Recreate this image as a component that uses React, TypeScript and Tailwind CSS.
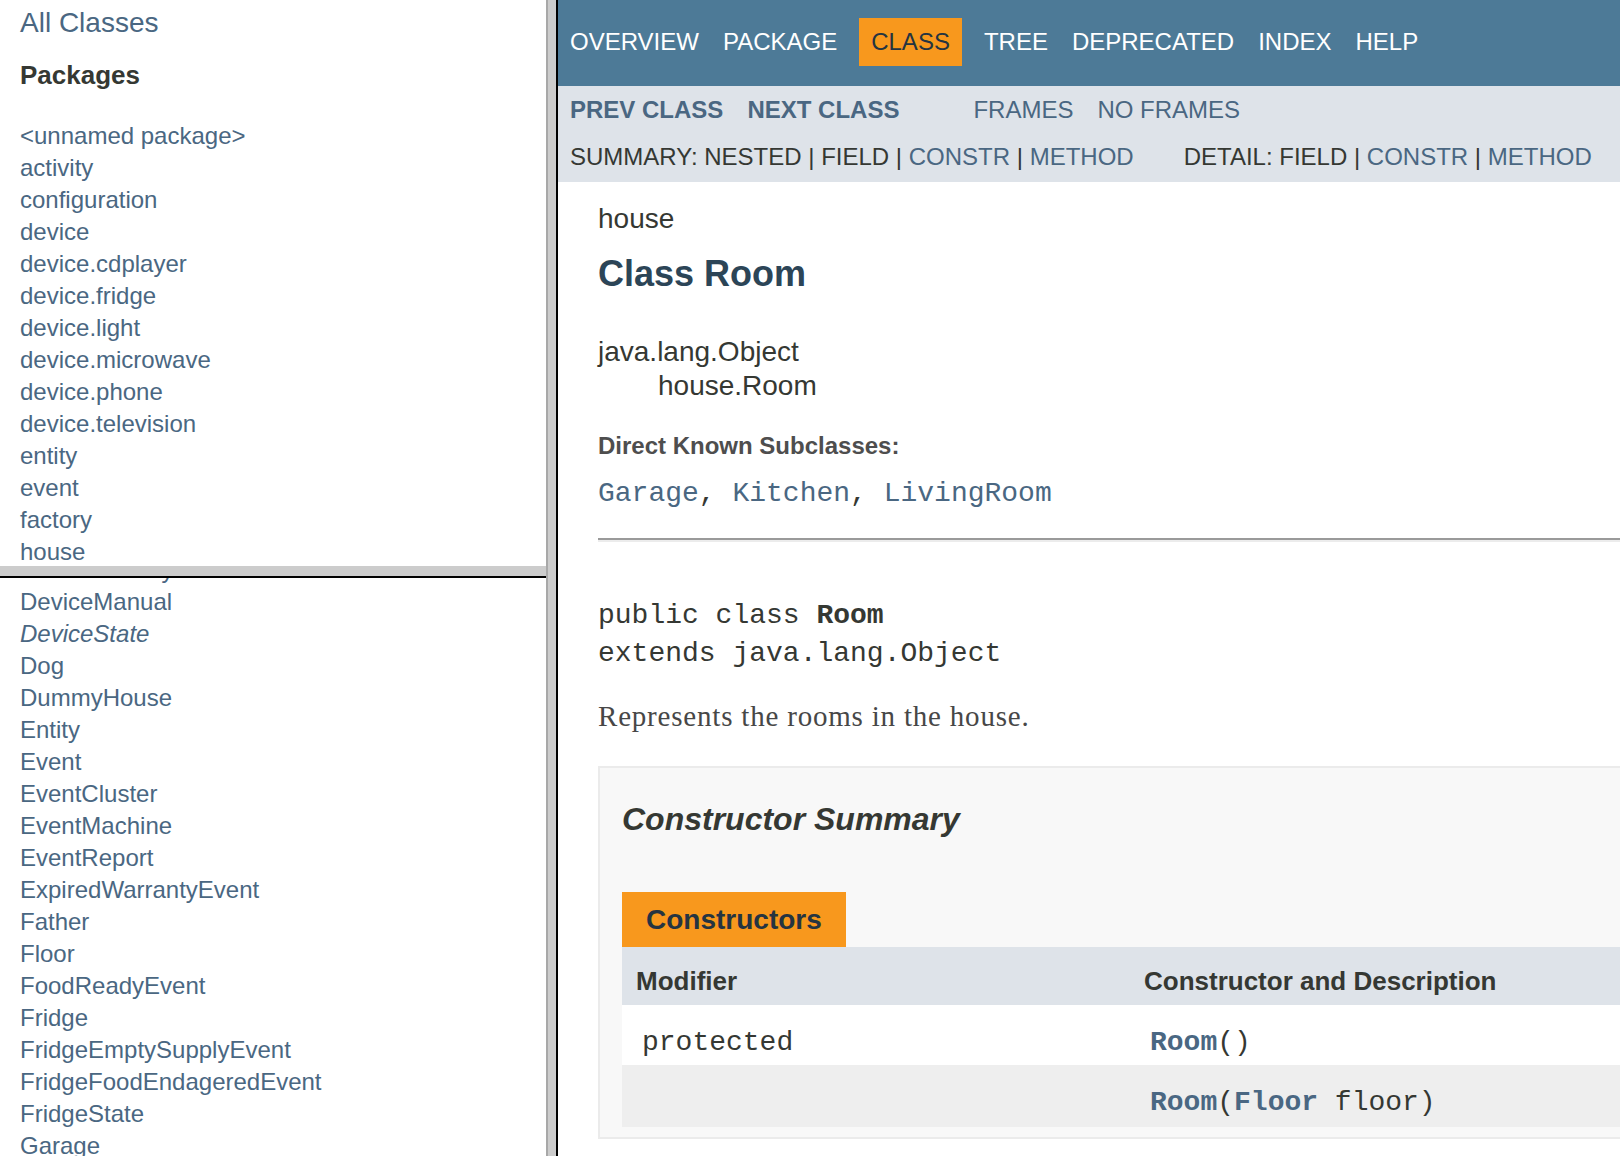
import type { ReactNode } from 'react'

const packages = [
  '<unnamed package>',
  'activity',
  'configuration',
  'device',
  'device.cdplayer',
  'device.fridge',
  'device.light',
  'device.microwave',
  'device.phone',
  'device.television',
  'entity',
  'event',
  'factory',
  'house',
]

const classes: { name: string; italic?: boolean }[] = [
  { name: 'DeviceFactory' },
  { name: 'DeviceManual' },
  { name: 'DeviceState', italic: true },
  { name: 'Dog' },
  { name: 'DummyHouse' },
  { name: 'Entity' },
  { name: 'Event' },
  { name: 'EventCluster' },
  { name: 'EventMachine' },
  { name: 'EventReport' },
  { name: 'ExpiredWarrantyEvent' },
  { name: 'Father' },
  { name: 'Floor' },
  { name: 'FoodReadyEvent' },
  { name: 'Fridge' },
  { name: 'FridgeEmptySupplyEvent' },
  { name: 'FridgeFoodEndageredEvent' },
  { name: 'FridgeState' },
  { name: 'Garage' },
  { name: 'GarageDoor' },
]

const topNav = ['OVERVIEW', 'PACKAGE', 'CLASS', 'TREE', 'DEPRECATED', 'INDEX', 'HELP']

function A({ children, bold }: { children: ReactNode; bold?: boolean }) {
  return <a className={bold ? 'font-bold text-[#4A6782]' : 'text-[#4A6782]'}>{children}</a>
}

function Sidebar() {
  return (
    <div className="flex w-[546px] shrink-0 flex-col">
      <div className="h-[566px] overflow-hidden pl-5">
        <div className="pt-[7px] text-[28px] leading-8 text-[#4A6782]">All Classes</div>
        <h2 className="mt-[21px] text-[26px] leading-[30px] font-bold text-[#353833]">Packages</h2>
        <ul className="mt-[30px]">
          {packages.map((p) => (
            <li key={p} className="text-[24px] leading-8 whitespace-nowrap text-[#4A6782]">
              {p}
            </li>
          ))}
        </ul>
      </div>
      <div className="h-[10px] bg-[#cccccc]" />
      <div className="h-[2px] bg-black" />
      <div className="flex-1 overflow-hidden pl-5">
        <ul className="-mt-[24px]">
          {classes.map((c) => (
            <li
              key={c.name}
              className={
                c.italic
                  ? 'text-[24px] leading-8 whitespace-nowrap text-[#4A6782] italic'
                  : 'text-[24px] leading-8 whitespace-nowrap text-[#4A6782]'
              }
            >
              {c.name}
            </li>
          ))}
        </ul>
      </div>
    </div>
  )
}

function NavBars() {
  return (
    <>
      <div className="h-[86px] bg-[#4D7A97] pt-[18px]">
        <ul className="flex text-[24px] leading-7">
          {topNav.map((item) =>
            item === 'CLASS' ? (
              <li key={item} className="mx-[10px] bg-[#F8981D] px-3 py-[10px] text-[#253441]">
                {item}
              </li>
            ) : (
              <li key={item} className="px-3 py-[10px] text-white">
                {item}
              </li>
            ),
          )}
        </ul>
      </div>
      <div className="h-[96px] bg-[#dee3e9] pt-[10px] pl-3 text-[24px] leading-7 text-[#353833]">
        <div className="flex whitespace-nowrap">
          <A bold>PREV CLASS</A>
          <span className="ml-6">
            <A bold>NEXT CLASS</A>
          </span>
          <span className="ml-[74px]">
            <A>FRAMES</A>
          </span>
          <span className="ml-6">
            <A>NO FRAMES</A>
          </span>
        </div>
        <div className="mt-[19px] flex whitespace-nowrap">
          <span>
            SUMMARY: NESTED | FIELD | <A>CONSTR</A> | <A>METHOD</A>
          </span>
          <span className="ml-[50px]">
            DETAIL: FIELD | <A>CONSTR</A> | <A>METHOD</A>
          </span>
        </div>
      </div>
    </>
  )
}

function ConstructorSummary() {
  const mono = "font-['Liberation_Mono','Courier_New',monospace]"
  return (
    <div className="mt-[33px] border-2 border-[#ebebeb] bg-[#f8f8f8] pt-[32px] pb-[10px] pl-[22px]">
      <h3 className="text-[32px] leading-[38px] font-bold text-[#353833] italic">Constructor Summary</h3>
      <div className="mt-[54px]">
        <div className="w-fit bg-[#F8981D] px-6 pt-3 pb-[11px] text-[28px] leading-8 font-bold text-[#253441]">
          Constructors
        </div>
        <div className="flex h-[58px] bg-[#dee3e9] pt-[21px] text-[26px] leading-[26px] font-bold text-[#353833]">
          <div className="w-[508px] pl-[14px]">Modifier</div>
          <div className="pl-[14px]">Constructor and Description</div>
        </div>
        <div className={`flex h-[60px] bg-white pt-[24px] text-[28px] leading-7 text-[#353833] ${mono}`}>
          <div className="w-[508px] pl-5">protected</div>
          <div className="pl-5">
            <span className="font-bold text-[#4A6782]">Room</span>()
          </div>
        </div>
        <div className={`flex h-[62px] bg-[#eeeeee] pt-[24px] text-[28px] leading-7 text-[#353833] ${mono}`}>
          <div className="w-[508px] pl-5" />
          <div className="pl-5 whitespace-pre">
            <span className="font-bold text-[#4A6782]">Room</span>(<span className="font-bold text-[#4A6782]">Floor</span> floor)
          </div>
        </div>
      </div>
    </div>
  )
}

function ClassPage() {
  const mono = "font-['Liberation_Mono','Courier_New',monospace]"
  return (
    <div className="min-w-0 flex-1 overflow-hidden">
      <div className="w-[1240px]">
        <NavBars />
        <div className="ml-10 w-[1160px] text-[#353833]">
          <div className="mt-[21px] text-[28px] leading-8">house</div>
          <h2 className="mt-[19px] text-[36px] leading-10 font-bold text-[#2c4557]">Class Room</h2>
          <div className="mt-[41px] text-[28px] leading-[34px]">
            <div>java.lang.Object</div>
            <div className="pl-[60px]">house.Room</div>
          </div>
          <div className="mt-[29px] text-[24px] leading-7 font-bold text-[#4E4E4E]">Direct Known Subclasses:</div>
          <div className={`mt-[18px] text-[28px] leading-8 ${mono}`}>
            <a className="text-[#4A6782]">Garage</a>, <a className="text-[#4A6782]">Kitchen</a>,{' '}
            <a className="text-[#4A6782]">LivingRoom</a>
          </div>
          <div className="mt-[28px] h-[4px] border-t-2 border-b-2 border-t-[#9a9a9a] border-b-[#ececec]" />
          <pre className={`mt-[55px] text-[28px] leading-[38px] text-[#353833] ${mono}`}>
            public class <span className="font-bold">Room</span>
            {'\n'}extends java.lang.Object
          </pre>
          <p className="mt-[26px] font-['Liberation_Serif','Times_New_Roman',serif] text-[29px] leading-[34px] tracking-[0.8px] text-[#474747]">
            Represents the rooms in the house.
          </p>
          <ConstructorSummary />
        </div>
      </div>
    </div>
  )
}

export default function App() {
  return (
    <div className="flex h-[1156px] w-[1620px] overflow-hidden bg-white font-['Liberation_Sans',Arial,sans-serif]">
      <Sidebar />
      <div className="w-[2px] shrink-0 bg-[#a8a8a8]" />
      <div className="w-[8px] shrink-0 bg-[#cccccc]" />
      <div className="w-[2px] shrink-0 bg-black" />
      <ClassPage />
    </div>
  )
}
